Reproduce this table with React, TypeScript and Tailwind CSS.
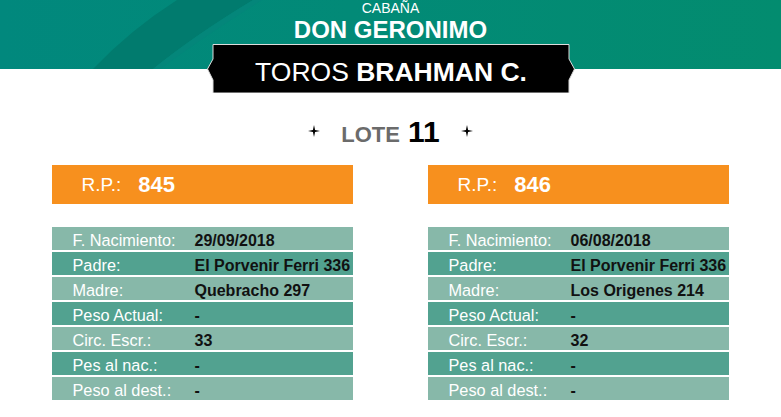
import React from "react";

type Row = { label: string; value: string };

const cards: { rp: string; rows: Row[] }[] = [
  {
    rp: "845",
    rows: [
      { label: "F. Nacimiento:", value: "29/09/2018" },
      { label: "Padre:", value: "El Porvenir Ferri 336" },
      { label: "Madre:", value: "Quebracho 297" },
      { label: "Peso Actual:", value: "-" },
      { label: "Circ. Escr.:", value: "33" },
      { label: "Pes al nac.:", value: "-" },
      { label: "Peso al dest.:", value: "-" },
    ],
  },
  {
    rp: "846",
    rows: [
      { label: "F. Nacimiento:", value: "06/08/2018" },
      { label: "Padre:", value: "El Porvenir Ferri 336" },
      { label: "Madre:", value: "Los Origenes 214" },
      { label: "Peso Actual:", value: "-" },
      { label: "Circ. Escr.:", value: "32" },
      { label: "Pes al nac.:", value: "-" },
      { label: "Peso al dest.:", value: "-" },
    ],
  },
];

function Star() {
  return (
    <svg width="12" height="12" viewBox="0 0 10 10" className="block">
      <path d="M5 0 L5.9 4.1 L10 5 L5.9 5.9 L5 10 L4.1 5.9 L0 5 L4.1 4.1 Z" fill="#000" />
    </svg>
  );
}

function HeaderBg() {
  return (
    <svg
      className="absolute left-0 top-0 w-full h-[69px]"
      viewBox="0 0 781 69"
      preserveAspectRatio="none"
    >
      <defs>
        <linearGradient id="g" x1="0" y1="0" x2="1" y2="0">
          <stop offset="0" stopColor="#01887d" />
          <stop offset="0.45" stopColor="#028a77" />
          <stop offset="1" stopColor="#038c6f" />
        </linearGradient>
      </defs>
      <rect x="0" y="0" width="781" height="69" fill="url(#g)" />
      <path d="M93 69 Q130 30 177 0 L253 0 Q195 35 153 69 Z" fill="#017b6e" />
      <path d="M153 69 Q195 35 253 0 L262 0 Q205 36 160 69 Z" fill="#04867a" />
    </svg>
  );
}

function Banner() {
  return (
    <div className="relative w-[368px] h-[49px] flex items-center justify-center pt-[7px]">
      <svg className="absolute left-0 top-0" width="368" height="49" viewBox="0 0 368 49">
        <path
          d="M6 49 L6 36 L0.5 25 L6 15 L6 0.5 L362 0.5 L362 15 L367.5 25 L362 36 L362 49 Z"
          fill="#000"
          stroke="#dcdcdc"
          strokeWidth="1"
        />
      </svg>
      <span className="relative text-white text-[26.5px] leading-none">
        TOROS <span className="font-bold">BRAHMAN C.</span>
      </span>
    </div>
  );
}

function Card({ rp, rows }: { rp: string; rows: Row[] }) {
  return (
    <div className="w-[301px] flex flex-col">
      <div className="h-[39px] bg-[#f7901e] flex items-center pl-[30px] text-white">
        <span className="text-[19px] leading-none">R.P.:</span>
        <span className="text-[22px] font-bold leading-none ml-[17px]">{rp}</span>
      </div>
      <div className="mt-[23px] flex flex-col gap-[2px]">
        {rows.map((r, i) => (
          <div
            key={r.label}
            className={`h-[23px] flex items-center pt-[4px] whitespace-nowrap ${
              i % 2 === 0 ? "bg-[#87b8a9]" : "bg-[#52a290]"
            }`}
          >
            <span className="w-[143px] shrink-0 pl-[21px] text-white text-[16.3px] leading-none">
              {r.label}
            </span>
            <span className="text-[#111] font-bold text-[16px] leading-none">{r.value}</span>
          </div>
        ))}
      </div>
    </div>
  );
}

export default function App() {
  return (
    <div
      className="w-[781px] h-[417px] bg-white overflow-hidden"
      style={{ fontFamily: '"Liberation Sans", Arial, sans-serif' }}
    >
      <div className="relative flex flex-col items-center">
        <HeaderBg />
        <div className="relative text-white text-[14px] leading-[16px] h-[16px]">CABAÑA</div>
        <div className="relative text-white text-[24px] font-bold leading-[24px] mt-[2px]">
          DON GERONIMO
        </div>
        <div className="relative mt-[2px] ml-[1px]">
          <Banner />
        </div>
      </div>

      <div className="mt-[23px] flex items-center justify-center h-[29px]">
        <Star />
        <div className="flex items-baseline ml-[21px] mr-[21px] pt-[2px]">
          <span className="text-[22px] font-bold text-[#6b6b6b] leading-none">LOTE</span>
          <span className="text-[30px] font-bold text-black leading-none ml-[8px]">11</span>
        </div>
        <Star />
      </div>

      <div className="mt-[20px] flex justify-center gap-[75px] ml-[-1px]">
        {cards.map((c) => (
          <Card key={c.rp} rp={c.rp} rows={c.rows} />
        ))}
      </div>
    </div>
  );
}
